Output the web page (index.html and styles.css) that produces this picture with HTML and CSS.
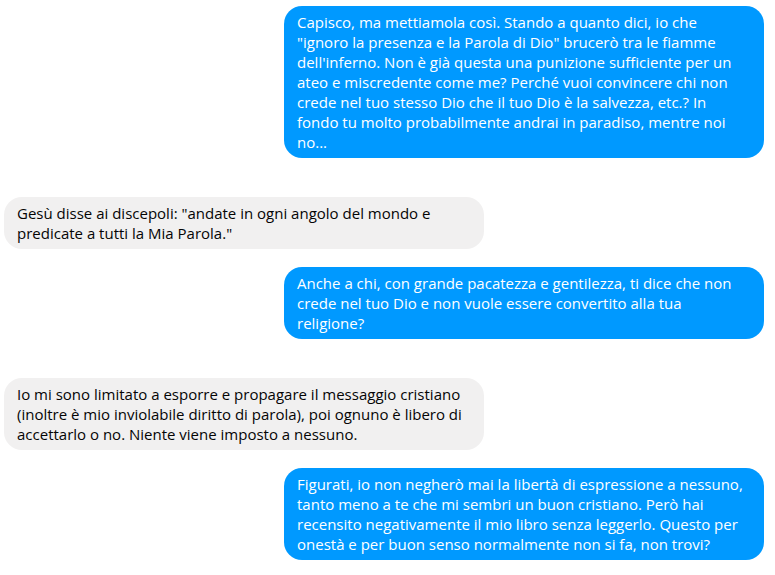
FILE: index.html
```html
<!DOCTYPE html>
<html lang="it">
<head>
    <meta charset="UTF-8">
    <meta name="viewport" content="width=device-width, initial-scale=1.0">
    <title>Chat</title>
    <link rel="stylesheet" href="styles.css">
</head>
<body>
    <div class="chat">
        <div class="message outgoing">Capisco, ma mettiamola così. Stando a quanto dici, io che "ignoro la presenza e la Parola di Dio" brucerò tra le fiamme dell'inferno. Non è già questa una punizione sufficiente per un ateo e miscredente come me? Perché vuoi convincere chi non crede nel tuo stesso Dio che il tuo Dio è la salvezza, etc.? In fondo tu molto probabilmente andrai in paradiso, mentre noi no...</div>
        <div class="message incoming">Gesù disse ai discepoli: "andate in ogni angolo del mondo e predicate a tutti la Mia Parola."</div>
        <div class="message outgoing">Anche a chi, con grande pacatezza e gentilezza, ti dice che non crede nel tuo Dio e non vuole essere convertito alla tua religione?</div>
        <div class="message incoming">Io mi sono limitato a esporre e propagare il messaggio cristiano (inoltre è mio inviolabile diritto di parola), poi ognuno è libero di accettarlo o no. Niente viene imposto a nessuno.</div>
        <div class="message outgoing">Figurati, io non negherò mai la libertà di espressione a nessuno, tanto meno a te che mi sembri un buon cristiano. Però hai recensito negativamente il mio libro senza leggerlo. Questo per onestà e per buon senso normalmente non si fa, non trovi?</div>
    </div>
</body>
</html>
```
FILE: styles.css
```css
body {
    margin: 0;
    background-color: #ffffff;
    font-family: 'Open Sans', 'Noto Sans', sans-serif;
}

.chat {
    display: flex;
    flex-direction: column;
    gap: 18px;
    padding: 6px 11px 0 4px;
}

.message {
    width: 480px;
    box-sizing: border-box;
    padding: 6px 13px;
    border-radius: 18px;
    font-size: 15px;
    line-height: 20px;
}

.outgoing {
    align-self: flex-end;
    background-color: #0099ff;
    color: #ffffff;
}

.incoming {
    align-self: flex-start;
    background-color: #f1f0f0;
    color: #050505;
}

/* a little more room when the other person replies */
.outgoing + .incoming {
    margin-top: 21px;
}
```
